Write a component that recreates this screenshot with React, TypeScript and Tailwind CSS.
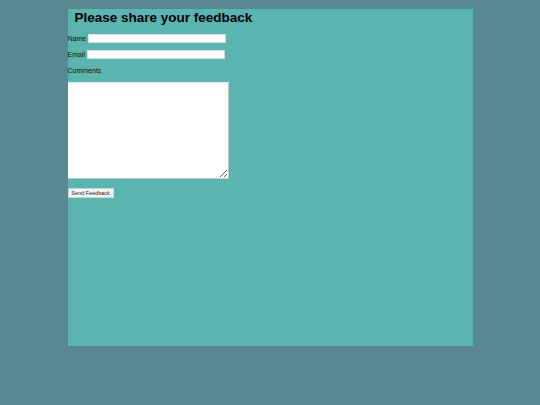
import React from "react";

export default function App() {
  return (
    <div className="min-h-[405px] w-full bg-[#5a8891] pt-[9px] font-['Liberation_Sans',Arial,sans-serif]">
      <div className="mx-auto h-[337px] w-[405px] bg-[#5ab4b0]">
        <h1 className="pl-[7px] pt-[2px] text-[13.5px] font-bold leading-[14px] text-black">
          Please share your feedback
        </h1>
        <form className="mt-[9px] text-[7px] leading-[9px] text-[#111]">
          <div className="flex items-center">
            <label htmlFor="name">Name</label>
            <input
              id="name"
              type="text"
              className="ml-[2px] h-[9px] w-[138px] border border-[#d6dede] bg-white"
            />
          </div>
          <div className="mt-[7px] flex items-center">
            <label htmlFor="email">Email</label>
            <input
              id="email"
              type="text"
              className="ml-[2px] h-[9px] w-[138px] border border-[#d6dede] bg-white"
            />
          </div>
          <div className="mt-[7px]">
            <label htmlFor="comments">Comments</label>
          </div>
          <textarea
            id="comments"
            className="mt-[7px] block h-[97px] w-[161px] border border-t-[#e4eaea] border-l-white border-r-[#b9cccc] border-b-[#b9cccc] bg-white outline-none"
          />
          <button
            type="button"
            className="mt-[9px] block h-[10px] w-[46px] border border-[#d0d0d0] bg-[#f4f4f4] p-0 text-center text-[5.5px] leading-[8px] text-[#222]"
          >
            Send Feedback
          </button>
        </form>
      </div>
    </div>
  );
}
